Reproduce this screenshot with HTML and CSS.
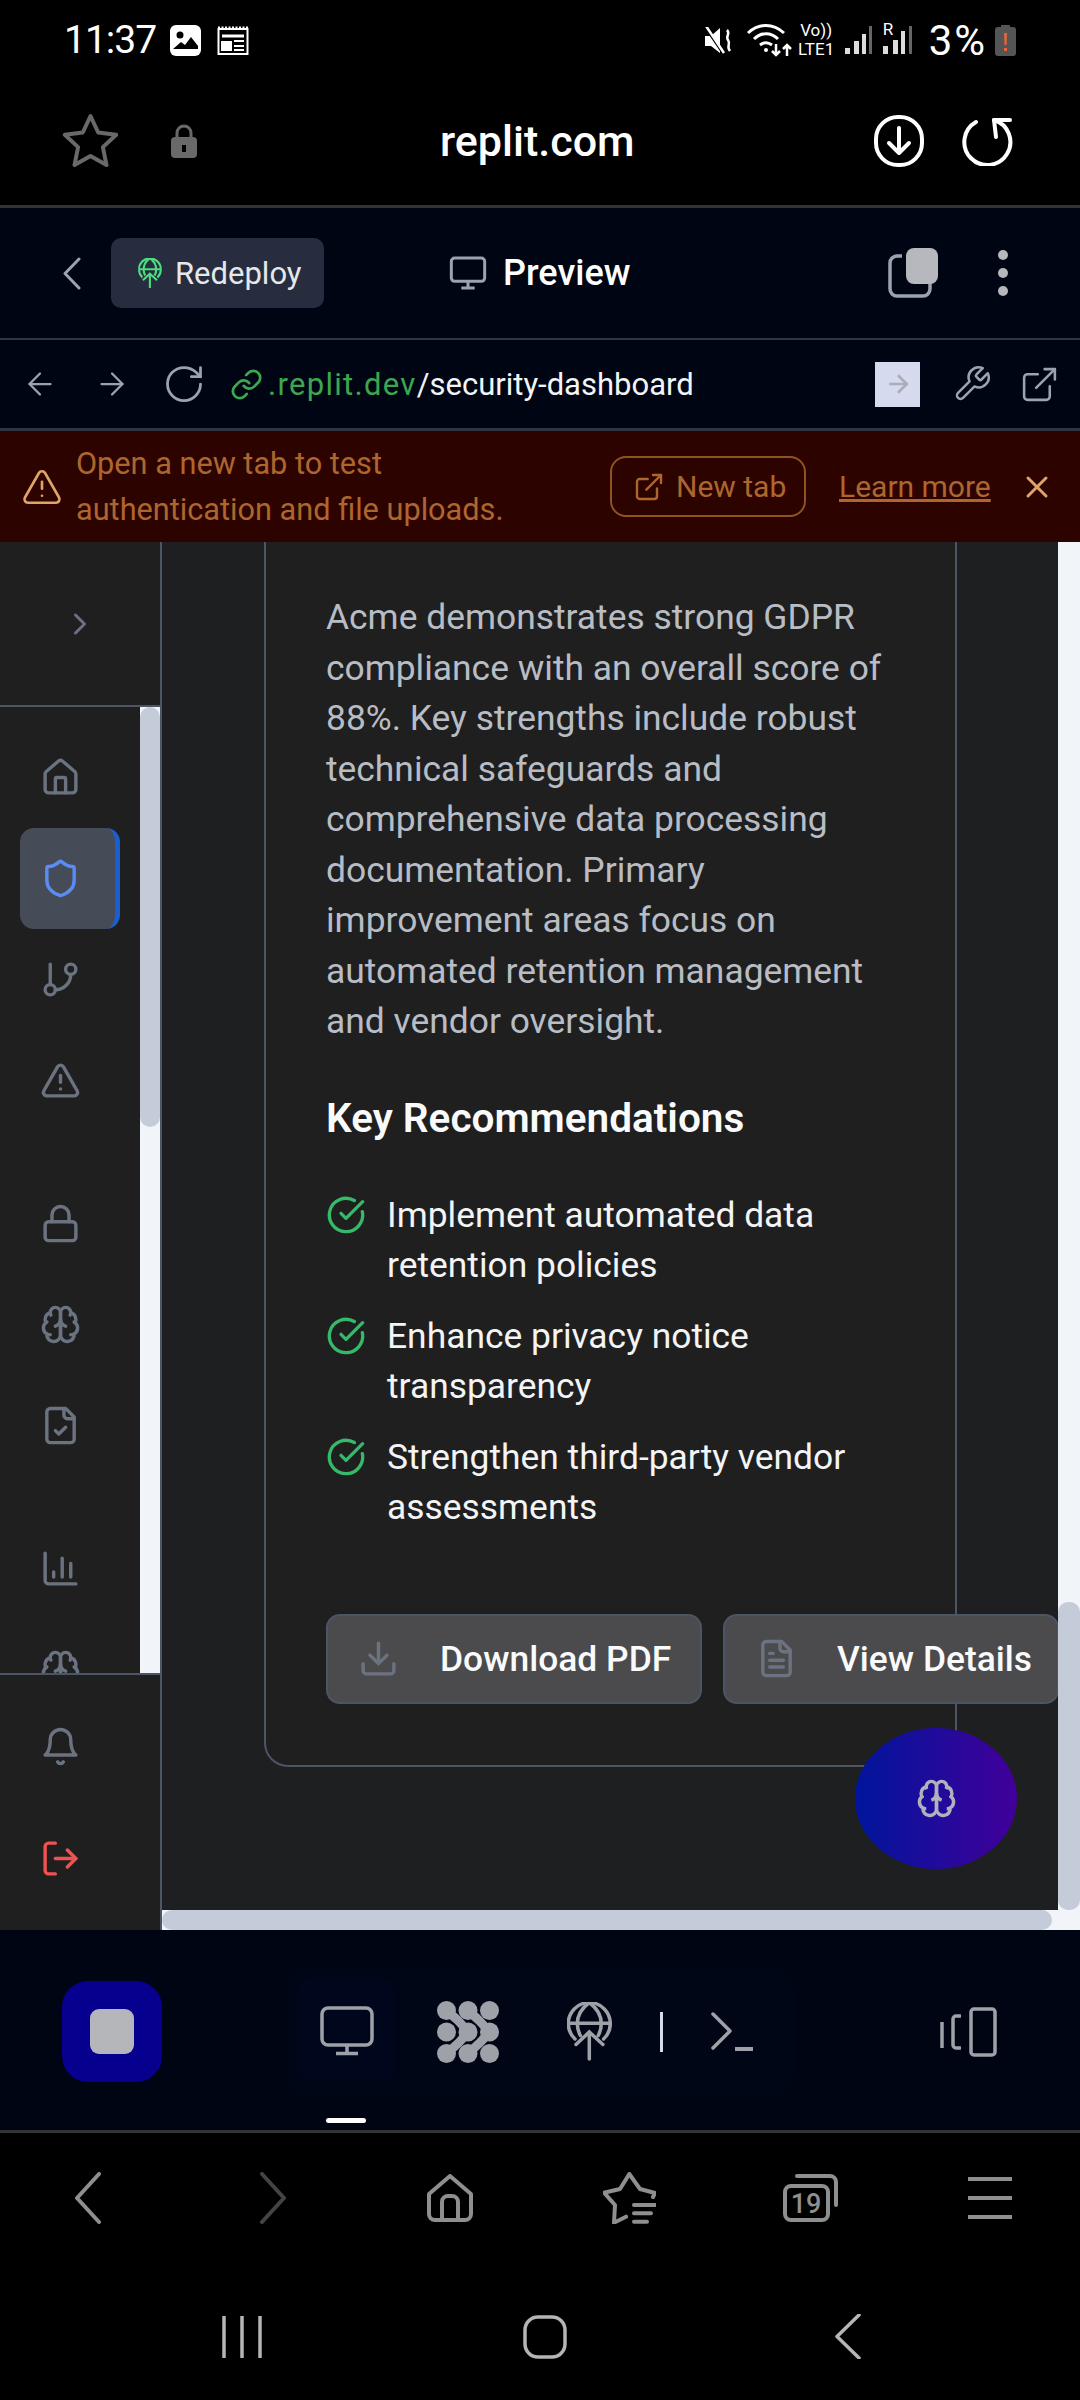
FILE: index.html
```html
<!DOCTYPE html>
<html lang="en">
<head>
    <meta charset="UTF-8">
    <meta name="viewport" content="width=device-width, initial-scale=1.0">
    <title>Security Dashboard Preview</title>
    <link rel="stylesheet" href="styles.css">
</head>
<body>
    <svg class="defs" width="0" height="0">
        <symbol id="i-brain" viewBox="0 0 24 24"><path d="M12 5a3 3 0 1 0-5.997.125 4 4 0 0 0-2.526 5.77 4 4 0 0 0 .556 6.588A4 4 0 1 0 12 18Z"/><path d="M12 5a3 3 0 1 1 5.997.125 4 4 0 0 1 2.526 5.77 4 4 0 0 1-.556 6.588A4 4 0 1 1 12 18Z"/><path d="M15 13a4.5 4.5 0 0 1-3-4 4.5 4.5 0 0 1-3 4"/><path d="M17.599 6.5a3 3 0 0 0 .399-1.375"/><path d="M6.003 5.125A3 3 0 0 0 6.401 6.5"/><path d="M3.477 10.896a4 4 0 0 1 .585-.396"/><path d="M19.938 10.5a4 4 0 0 1 .585.396"/><path d="M6 18a4 4 0 0 1-1.967-.516"/><path d="M19.967 17.484A4 4 0 0 1 18 18"/></symbol>
        <symbol id="i-check" viewBox="0 0 24 24"><path d="M21.801 10A10 10 0 1 1 17 3.335"/><path d="m9 11 3 3L22 4"/></symbol>
        <symbol id="i-monitor" viewBox="0 0 24 24"><rect x="2" y="3" width="20" height="14" rx="2"/><path d="M8 21h8M12 17v4"/></symbol>
        <symbol id="i-external" viewBox="0 0 24 24"><path d="M15 3h6v6"/><path d="M10 14 21 3"/><path d="M18 13v6a2 2 0 0 1-2 2H5a2 2 0 0 1-2-2V8a2 2 0 0 1 2-2h6"/></symbol>
        <symbol id="i-globe-up" viewBox="0 0 45 59"><path d="M8 37A21 21 0 1 1 36.600 37"/><path d="M1.500 21.300h41.600M22.300 .5c-8 6-12 13-12 21 0 4 1 8 3 12M22.300 .5c8 6 12 13 12 21 0 4-1 8-3 12M22.300 31v26M9 42.500 22.300 30l13.600 12.500"/></symbol>
    </svg>

    <div class="status-bar">
        <span class="clock">11:37</span>
        <svg class="ml-16" width="31" height="31" viewBox="0 0 31 31"><rect width="31" height="31" rx="6" fill="#fff"/><circle cx="10" cy="10" r="3.500" fill="#000"/><path d="M3 24l8-7 4 3 6-8 7 9v3H3z" fill="#000"/></svg>
        <svg class="ml-16" width="32" height="29" viewBox="0 0 32 29" fill="none" stroke="#fff" stroke-width="2"><rect x="1.500" y="3" width="29" height="25"/><path d="M1 2h30" stroke-dasharray="2 1.500" stroke-width="3"/><path d="M5 10h22" stroke-width="3"/><path d="M5 16h9v8H5z" fill="#fff"/><path d="M17 15h10M17 20h10M17 24h10"/></svg>
        <div class="status-right">
            <svg width="29" height="27" viewBox="0 0 29 27"><path d="M1 9h6l9-8v25l-9-7H1z" fill="#fff"/><path d="M2 1l17 25" stroke="#000" stroke-width="3"/><path d="M2 -1l18 27" stroke="#fff" stroke-width="2.500"/><path d="M23 3c4 4-2 6 1 10s-2 6 2 11" fill="none" stroke="#fff" stroke-width="2.500"/></svg>
            <svg class="ml-14" width="45" height="33" viewBox="0 0 45 33" fill="none" stroke="#fff" stroke-width="3"><path d="M1 9c11-10 25-10 36 0M7 15c7-7 17-7 24 0M13 21c4-3 8-3 12 0"/><circle cx="19" cy="26" r="2" fill="#fff" stroke="none"/><path d="M29 20v11M25 27l4 4 4-4M40 32V21M36 25l4-4 4 4" stroke-width="2.500"/></svg>
            <div class="volte ml-5"><span>Vo))</span><span>LTE1</span></div>
            <svg class="ml-9" width="27" height="28" viewBox="0 0 27 28"><path d="M0 22h5v6H0zM9 15h5v13H9zM17 8h4v20h-4z" fill="#ddd"/><path d="M24 0h3v28h-3z" fill="#666"/></svg>
            <div class="roam ml-11"><span class="roam-r">R</span><svg width="30" height="28" viewBox="0 0 30 28"><path d="M0 20h5v8H0zM10 14h5v14h-5zM18 5h4v23h-4z" fill="#ddd"/><path d="M26 0h3v28h-3z" fill="#666"/></svg></div>
            <span class="battery-text ml-16">3%</span>
            <svg class="ml-8" width="21" height="31" viewBox="0 0 21 31"><path d="M6 0h9v3H6z" fill="#555"/><rect y="2" width="21" height="29" rx="3" fill="#555"/><path d="M9 8h3l-.5 12h-2zM9 23h3v3H9z" fill="#e8643c"/></svg>
        </div>
    </div>

    <div class="browser-bar">
        <svg width="57" height="56" viewBox="0 0 57 56" fill="none" stroke="#696969" stroke-width="4" stroke-linejoin="round"><path d="M28.500 3l7.700 16.500 18 2.300-13.300 12.300 3.600 18-16-9-16 9 3.600-18L2.800 21.800l18-2.300z"/></svg>
        <svg class="lock-icon" width="26" height="34" viewBox="0 0 26 34"><path d="M6 15V9a7 7 0 0 1 14 0v6" fill="none" stroke="#696969" stroke-width="3"/><rect y="13" width="26" height="21" rx="4" fill="#696969"/><path d="M11 21h4v7h-4z" fill="#000"/></svg>
        <span class="site-name">replit.com</span>
        <div class="browser-actions">
            <svg width="50" height="52" viewBox="0 0 50 52" fill="none" stroke="#fff" stroke-width="4" stroke-linecap="round" stroke-linejoin="round"><rect x="2" y="2" width="46" height="48" rx="22"/><path d="M25 13v25M15 28l10 10 10-10"/></svg>
            <svg width="52" height="50" viewBox="0 0 52 50" fill="none" stroke="#fff" stroke-width="4" stroke-linecap="round" stroke-linejoin="round"><path d="M32 4A23 23 0 1 1 14 6"/><path d="M32 4h16M32 4l2 17"/></svg>
        </div>
    </div>

    <div class="app-header">
        <svg width="19" height="33" viewBox="0 0 19 33" fill="none" stroke="#9ca3af" stroke-width="3" stroke-linecap="round" stroke-linejoin="round"><path d="M17 2L3 16.500 17 31"/></svg>
        <div class="deploy-pill">
            <svg width="24" height="31" viewBox="0 0 45 59" fill="none" stroke="#4ade80" stroke-width="4"><use href="#i-globe-up"/></svg>
            <span>Redeploy</span>
        </div>
        <div class="preview-title">
            <svg class="line-icon" width="40" height="40" viewBox="0 0 24 24"><use href="#i-monitor"/></svg>
            <span>Preview</span>
        </div>
        <svg class="copy-icon" width="50" height="50" viewBox="0 0 50 50"><path d="M14 8H9a7 7 0 0 0-7 7v26a7 7 0 0 0 7 7h26a7 7 0 0 0 7-7v-6" fill="none" stroke="#9ca3af" stroke-width="3.500"/><rect x="18" y="0" width="32" height="36" rx="8" fill="#b6b8bd"/></svg>
        <svg class="more-icon" width="10" height="46" viewBox="0 0 10 46" fill="#b6b8bd"><circle cx="5" cy="5" r="5"/><circle cx="5" cy="23" r="5"/><circle cx="5" cy="41" r="5"/></svg>
    </div>

    <div class="url-bar">
        <svg class="url-icon" width="36" height="36" viewBox="0 0 24 24"><path d="m12 19-7-7 7-7"/><path d="M19 12H5"/></svg>
        <svg class="url-icon ml-36" width="36" height="36" viewBox="0 0 24 24"><path d="m12 5 7 7-7 7"/><path d="M5 12h14"/></svg>
        <svg class="url-icon ml-32" width="44" height="44" viewBox="0 0 24 24"><path d="M21 12a9 9 0 1 1-9-9c2.520 0 4.930 1 6.740 2.740L21 8"/><path d="M21 3v5h-5"/></svg>
        <svg class="link-icon" width="33" height="33" viewBox="0 0 24 24"><path d="M10 13a5 5 0 0 0 7.540.540l3-3a5 5 0 0 0-7.070-7.070l-1.720 1.710"/><path d="M14 11a5 5 0 0 0-7.540-.540l-3 3a5 5 0 0 0 7.070 7.070l1.710-1.710"/></svg>
        <span class="url-text"><span class="url-host">.replit.dev</span>/security-dashboard</span>
        <div class="go-btn"><svg width="30" height="30" viewBox="0 0 24 24" fill="none" stroke="#a8adb8" stroke-width="2"><path d="m12 5 7 7-7 7"/><path d="M5 12h14"/></svg></div>
        <svg class="url-icon ml-32" width="40" height="40" viewBox="0 0 24 24"><path d="M14.700 6.300a1 1 0 0 0 0 1.400l1.600 1.600a1 1 0 0 0 1.400 0l3.770-3.770a6 6 0 0 1-7.940 7.940l-6.910 6.910a2.120 2.120 0 0 1-3-3l6.910-6.910a6 6 0 0 1 7.940-7.940l-3.760 3.760z"/></svg>
        <svg class="url-icon ml-27" width="41" height="41" viewBox="0 0 24 24"><use href="#i-external"/></svg>
    </div>

    <div class="warn-banner">
        <svg class="warn-icon" width="42" height="42" viewBox="0 0 24 24"><path d="m21.730 18-8-14a2 2 0 0 0-3.480 0l-8 14A2 2 0 0 0 4 21h16a2 2 0 0 0 1.730-3"/><path d="M12 9v4"/><path d="M12 17h.01"/></svg>
        <p class="warn-text">Open a new tab to test<br>authentication and file uploads.</p>
        <div class="warn-btn">
            <svg width="32" height="32" viewBox="0 0 24 24"><use href="#i-external"/></svg>
            <span>New tab</span>
        </div>
        <span class="warn-link">Learn more</span>
        <svg class="warn-close" width="36" height="36" viewBox="0 0 24 24"><path d="M18 6 6 18"/><path d="m6 6 12 12"/></svg>
    </div>

    <div class="workspace">
        <aside class="sidebar">
            <div class="side-top">
                <svg class="nav-icon" width="36" height="36" viewBox="0 0 24 24"><path d="m9 18 6-6-6-6"/></svg>
            </div>
            <div class="side-nav">
                <div class="side-scroll">
                    <div class="nav-item"><svg class="nav-icon" width="41" height="41" viewBox="0 0 24 24"><path d="M15 21v-8a1 1 0 0 0-1-1h-4a1 1 0 0 0-1 1v8"/><path d="M3 10a2 2 0 0 1 .709-1.528l7-5.999a2 2 0 0 1 2.582 0l7 5.999A2 2 0 0 1 21 10v9a2 2 0 0 1-2 2H5a2 2 0 0 1-2-2z"/></svg></div>
                    <div class="nav-item active"><svg class="nav-icon" width="41" height="41" viewBox="0 0 24 24"><path d="M20 13c0 5-3.500 7.500-7.660 8.950a1 1 0 0 1-.670-.010C7.500 20.500 4 18 4 13V6a1 1 0 0 1 1-1c2 0 4.500-1.200 6.240-2.720a1.170 1.170 0 0 1 1.520 0C14.510 3.810 17 5 19 5a1 1 0 0 1 1 1z"/></svg></div>
                    <div class="nav-item"><svg class="nav-icon" width="41" height="41" viewBox="0 0 24 24"><path d="M6 3v12"/><circle cx="18" cy="6" r="3"/><circle cx="6" cy="18" r="3"/><path d="M18 9a9 9 0 0 1-9 9"/></svg></div>
                    <div class="nav-item"><svg class="nav-icon" width="41" height="41" viewBox="0 0 24 24"><path d="m21.730 18-8-14a2 2 0 0 0-3.480 0l-8 14A2 2 0 0 0 4 21h16a2 2 0 0 0 1.730-3"/><path d="M12 9v4"/><path d="M12 17h.01"/></svg></div>
                    <div class="nav-item group-start"><svg class="nav-icon" width="41" height="41" viewBox="0 0 24 24"><rect x="3" y="11" width="18" height="11" rx="2"/><path d="M7 11V7a5 5 0 0 1 10 0v4"/></svg></div>
                    <div class="nav-item"><svg class="nav-icon" width="41" height="41" viewBox="0 0 24 24"><use href="#i-brain"/></svg></div>
                    <div class="nav-item"><svg class="nav-icon" width="41" height="41" viewBox="0 0 24 24"><path d="M15 2H6a2 2 0 0 0-2 2v16a2 2 0 0 0 2 2h12a2 2 0 0 0 2-2V7Z"/><path d="M14 2v4a2 2 0 0 0 2 2h4"/><path d="m9 15 2 2 4-4"/></svg></div>
                    <div class="nav-item group-start"><svg class="nav-icon" width="41" height="41" viewBox="0 0 24 24"><path d="M3 3v16a2 2 0 0 0 2 2h16"/><path d="M18 17V9"/><path d="M13 17V6"/><path d="M8 17v-3"/></svg></div>
                    <div class="nav-item"><svg class="nav-icon" width="41" height="41" viewBox="0 0 24 24"><use href="#i-brain"/></svg></div>
                </div>
                <div class="side-track"><div class="side-thumb"></div></div>
            </div>
            <div class="side-foot">
                <div class="foot-item"><svg class="nav-icon" width="41" height="41" viewBox="0 0 24 24"><path d="M6 8a6 6 0 0 1 12 0c0 7 3 9 3 9H3s3-2 3-9"/><path d="M10.300 21a1.940 1.940 0 0 0 3.400 0"/></svg></div>
                <div class="foot-item logout"><svg class="nav-icon" width="41" height="41" viewBox="0 0 24 24"><path d="M9 21H5a2 2 0 0 1-2-2V5a2 2 0 0 1 2-2h4"/><path d="m16 17 5-5-5-5"/><path d="M21 12H9"/></svg></div>
            </div>
        </aside>

        <div class="main-wrap">
            <div class="main-row">
                <main class="main">
                    <section class="card">
                        <p class="summary">Acme demonstrates strong GDPR compliance with an overall score of 88%. Key strengths include robust technical safeguards and comprehensive data processing documentation. Primary improvement areas focus on automated retention management and vendor oversight.</p>
                        <h3 class="rec-title">Key Recommendations</h3>
                        <ul class="rec-list">
                            <li><svg class="check-icon" width="40" height="40" viewBox="0 0 24 24"><use href="#i-check"/></svg><span>Implement automated data retention policies</span></li>
                            <li><svg class="check-icon" width="40" height="40" viewBox="0 0 24 24"><use href="#i-check"/></svg><span>Enhance privacy notice transparency</span></li>
                            <li><svg class="check-icon" width="40" height="40" viewBox="0 0 24 24"><use href="#i-check"/></svg><span>Strengthen third-party vendor assessments</span></li>
                        </ul>
                        <div class="card-actions">
                            <button class="action-btn btn-pdf">
                                <svg class="nav-icon" width="41" height="41" viewBox="0 0 24 24"><path d="M21 15v4a2 2 0 0 1-2 2H5a2 2 0 0 1-2-2v-4"/><path d="m7 10 5 5 5-5"/><path d="M12 15V3"/></svg>
                                <span>Download PDF</span>
                            </button>
                            <button class="action-btn btn-view">
                                <svg class="nav-icon" width="41" height="41" viewBox="0 0 24 24"><path d="M15 2H6a2 2 0 0 0-2 2v16a2 2 0 0 0 2 2h12a2 2 0 0 0 2-2V7Z"/><path d="M14 2v4a2 2 0 0 0 2 2h4"/><path d="M10 9H8"/><path d="M16 13H8"/><path d="M16 17H8"/></svg>
                                <span>View Details</span>
                            </button>
                        </div>
                    </section>
                    <div class="fab"><svg width="41" height="41" viewBox="0 0 24 24"><use href="#i-brain"/></svg></div>
                </main>
                <div class="main-track"><div class="main-thumb"></div></div>
            </div>
            <div class="h-track"><div class="h-thumb"></div></div>
        </div>
    </div>

    <div class="tool-bar">
        <div class="stop-btn"><div class="stop-square"></div></div>
        <div class="tool-group">
            <div class="tool-tab"><svg width="54" height="50" viewBox="0 0 54 50" fill="none" stroke="#9ea2a8" stroke-width="3.500"><rect x="2" y="2" width="50" height="37" rx="6"/><path d="M27 39v8M16 47.500h22"/></svg></div>
            <svg class="dots-icon" width="62" height="62" viewBox="0 0 62 62" fill="#9ea2a8"><circle cx="9.500" cy="9.500" r="9.500"/><circle cx="31" cy="9.500" r="9.500"/><circle cx="52.500" cy="9.500" r="9.500"/><circle cx="9.500" cy="31" r="9.500"/><circle cx="31" cy="31" r="9.500"/><circle cx="52.500" cy="31" r="9.500"/><circle cx="9.500" cy="52.500" r="9.500"/><circle cx="31" cy="52.500" r="9.500"/><circle cx="52.500" cy="52.500" r="9.500"/><path d="M9.500 9.500C22 20 22 20 31 31 22 42 22 42 9.500 52.500M31 9.500C43 20 43 20 52.500 31 43 42 43 42 31 52.500" fill="none" stroke="#9ea2a8" stroke-width="9"/></svg>
            <svg class="globe-icon" width="45" height="59" viewBox="0 0 45 59" fill="none" stroke="#9ea2a8" stroke-width="3.500" stroke-linecap="round"><use href="#i-globe-up"/></svg>
            <div class="tool-sep"></div>
            <svg class="term-icon" width="44" height="40" viewBox="0 0 44 40" fill="none" stroke="#9ea2a8" stroke-width="3.500" stroke-linecap="round" stroke-linejoin="round"><path d="M2 2l17 17L2 36"/><path d="M24 37h18" stroke-linecap="butt" stroke-width="4"/></svg>
        </div>
        <svg class="device-icon" width="57" height="50" viewBox="0 0 57 50" fill="none" stroke="#9ea2a8" stroke-width="3.500"><path d="M2 15v26"/><path d="M21 9h-5a3 3 0 0 0-3 3v26a3 3 0 0 0 3 3h5"/><rect x="31" y="2" width="24" height="46" rx="3"/></svg>
    </div>
    <div class="tool-indicator-row"><div class="tool-indicator"></div></div>

    <div class="browser-nav">
        <svg width="27" height="52" viewBox="0 0 27 52" class="bn-stroke"><path d="M25 2L3 26l22 24"/></svg>
        <svg width="26" height="52" viewBox="0 0 26 52" class="bn-stroke dim"><path d="M2 2l22 24L2 50"/></svg>
        <svg width="48" height="48" viewBox="0 0 48 48" class="bn-stroke"><path d="M3 20L24 2l21 18v20a6 6 0 0 1-6 6H9a6 6 0 0 1-6-6z"/><path d="M16 46V28a6 6 0 0 1 6-6h4a6 6 0 0 1 6 6v18"/></svg>
        <svg width="53" height="52" viewBox="0 0 53 52" class="bn-stroke"><path d="M50 25l2-4-15-4L26.300 2 17 17 1 20.700 12 33l-1 17.700L23 44.700"/><path d="M31 33h22M31 41.300h17M31 49.700h13"/></svg>
        <svg width="55" height="48" viewBox="0 0 55 48" class="bn-stroke"><rect x="2" y="12" width="43" height="34" rx="6"/><path d="M14 2h33a6 6 0 0 1 6 6v23"/><text class="tab-count" x="23" y="39">19</text></svg>
        <svg width="44" height="42" viewBox="0 0 44 42" fill="#8f8f8f"><rect width="44" height="4"/><rect y="19" width="44" height="4"/><rect y="38" width="44" height="4"/></svg>
    </div>

    <div class="system-nav">
        <svg width="40" height="42" viewBox="0 0 40 42" class="sys-stroke"><path d="M2 0v42M20 0v42M38 0v42"/></svg>
        <svg width="44" height="44" viewBox="0 0 44 44" class="sys-stroke"><rect x="2" y="2" width="40" height="40" rx="13"/></svg>
        <svg width="26" height="45" viewBox="0 0 26 45" class="sys-stroke"><path d="M24 1L2 22.500 24 44"/></svg>
    </div>
</body>
</html>
```

FILE: styles.css
```css
* {
    box-sizing: border-box;
}
html, body {
    margin: 0;
    padding: 0;
}
body {
    width: 1080px;
    height: 2400px;
    overflow: hidden;
    background-color: #000;
    color: #fff;
    font-family: Roboto, "Liberation Sans", sans-serif;
}
.defs {
    position: absolute;
}
svg {
    flex-shrink: 0;
    display: block;
}
p, h3, ul {
    margin: 0;
    padding: 0;
}
.ml-5 { margin-left: 5px; }
.ml-8 { margin-left: 8px; }
.ml-9 { margin-left: 9px; }
.ml-11 { margin-left: 11px; }
.ml-14 { margin-left: 14px; }
.ml-16 { margin-left: 16px; }
.ml-27 { margin-left: 27px; }
.ml-32 { margin-left: 32px; }
.ml-36 { margin-left: 36px; }

/* phone status bar */
.status-bar {
    height: 80px;
    display: flex;
    align-items: center;
    padding: 0 64px;
}
.clock {
    font-size: 39px;
    letter-spacing: -1px;
    width: 90px;
}
.status-right {
    margin-left: auto;
    display: flex;
    align-items: center;
}
.volte {
    display: flex;
    flex-direction: column;
    align-items: center;
    width: 39px;
    font-size: 17px;
    line-height: 19px;
}
.roam {
    position: relative;
    width: 30px;
    height: 28px;
}
.roam-r {
    position: absolute;
    left: 0;
    top: -7px;
    font-size: 17px;
}
.battery-text {
    font-size: 42px;
    letter-spacing: 2px;
}

/* samsung browser top bar */
.browser-bar {
    height: 128px;
    padding: 0 66px 4px 62px;
    display: flex;
    align-items: center;
    border-bottom: 3px solid #333;
}
.lock-icon {
    margin-left: 52px;
}
.site-name {
    margin-left: 243px;
    font-size: 43px;
    font-weight: 500;
}
.browser-actions {
    margin-left: auto;
    display: flex;
    align-items: center;
    gap: 38px;
}

/* replit header */
.app-header {
    height: 132px;
    background-color: #000514;
    display: flex;
    align-items: center;
    padding-left: 62px;
    border-bottom: 2px solid #2f3545;
    color: #e5e7eb;
}
.deploy-pill {
    margin-left: 30px;
    width: 213px;
    height: 70px;
    background-color: #272d3f;
    border-radius: 10px;
    display: flex;
    align-items: center;
    gap: 13px;
    padding-left: 27px;
    font-size: 31px;
}
.preview-title {
    margin-left: 124px;
    display: flex;
    align-items: center;
    gap: 15px;
    font-size: 36px;
    font-weight: 500;
    color: #fff;
}
.line-icon {
    fill: none;
    stroke: #9ca3af;
    stroke-width: 1.800;
}
.copy-icon {
    margin-left: 258px;
}
.more-icon {
    margin-left: 60px;
}

/* url row */
.url-bar {
    height: 91px;
    background-color: #000514;
    display: flex;
    align-items: center;
    padding-left: 22px;
    border-bottom: 3px solid #2f3545;
}
.url-icon {
    fill: none;
    stroke: #9ca3af;
    stroke-width: 1.500;
    stroke-linecap: round;
    stroke-linejoin: round;
}
.link-icon {
    margin-left: 24px;
    fill: none;
    stroke: #3fa650;
    stroke-width: 2;
    stroke-linecap: round;
    stroke-linejoin: round;
}
.url-text {
    margin-left: 5px;
    width: 607px;
    font-size: 31px;
    color: #f3f4f6;
}
.url-host {
    color: #3fa650;
    letter-spacing: 1.300px;
}
.go-btn {
    width: 45px;
    height: 45px;
    background-color: #d5daee;
    display: flex;
    align-items: center;
    justify-content: center;
}

/* warning banner */
.warn-banner {
    height: 111px;
    background-color: #2d0300;
    display: flex;
    align-items: center;
    padding-left: 21px;
    color: #ad662d;
}
.warn-icon {
    fill: none;
    stroke: #e0a468;
    stroke-width: 1.500;
    stroke-linecap: round;
    stroke-linejoin: round;
}
.warn-text {
    margin-left: 13px;
    width: 534px;
    font-size: 30.700px;
    line-height: 46px;
    white-space: nowrap;
}
.warn-btn {
    width: 196px;
    height: 61px;
    border: 2px solid #8f5420;
    border-radius: 16px;
    display: flex;
    align-items: center;
    gap: 11px;
    padding-left: 21px;
    font-size: 30px;
}
.warn-btn svg {
    fill: none;
    stroke: #ad662d;
    stroke-width: 1.800;
    stroke-linecap: round;
    stroke-linejoin: round;
}
.warn-link {
    margin-left: 33px;
    font-size: 30px;
    text-decoration: underline;
}
.warn-close {
    margin-left: 28px;
    fill: none;
    stroke: #e0a468;
    stroke-width: 2;
    stroke-linecap: round;
}

/* dashboard */
.workspace {
    height: 1388px;
    display: flex;
    background-color: #1e1f21;
}
.sidebar {
    width: 162px;
    flex-shrink: 0;
    background-color: #1f1f1f;
    border-right: 2px solid #4b5563;
    display: flex;
    flex-direction: column;
    height: 100%;
}
.side-top {
    height: 165px;
    border-bottom: 2px solid #4b5563;
    display: flex;
    align-items: center;
    padding-left: 62px;
}
.side-nav {
    height: 968px;
    display: flex;
    border-bottom: 2px solid #4b5563;
}
.side-scroll {
    width: 140px;
    height: 966px;
    overflow: hidden;
    padding-top: 20px;
}
.side-track {
    width: 20px;
    background-color: #f1f5f9;
}
.side-thumb {
    height: 420px;
    background-color: #c3ccd8;
    border-radius: 10px;
}
.nav-icon {
    fill: none;
    stroke: #6b7280;
    stroke-width: 2;
    stroke-linecap: round;
    stroke-linejoin: round;
}
.nav-item {
    margin-left: 20px;
    width: 100px;
    height: 101px;
    padding-left: 20px;
    display: flex;
    align-items: center;
    border-radius: 14px;
}
.nav-item.active {
    background-color: #454b57;
    border-right: 5px solid #1a5fd0;
}
.nav-item.active .nav-icon {
    stroke: #5b8cf5;
}
.group-start {
    margin-top: 42px;
}
.side-foot {
    flex: 1;
    padding-top: 15px;
}
.foot-item {
    height: 112px;
    padding-left: 40px;
    display: flex;
    align-items: center;
}
.logout .nav-icon {
    stroke: #ef5350;
}
.main-wrap {
    flex: 1;
    display: flex;
    flex-direction: column;
    min-width: 0;
}
.main-row {
    height: 1368px;
    display: flex;
}
.main {
    position: relative;
    width: 896px;
    overflow: hidden;
    padding-left: 102px;
}
.card {
    width: 693px;
    height: 1225px;
    background-color: #1f1f1f;
    border: 2px solid #4b5563;
    border-top: none;
    border-radius: 0 0 24px 24px;
    padding: 50px 0 0 60px;
}
.summary {
    width: 570px;
    font-size: 35.400px;
    line-height: 50.500px;
    color: #b8bdc5;
}
.rec-title {
    margin-top: 43px;
    font-size: 40.500px;
    line-height: 56px;
    font-weight: 600;
    color: #f9fafb;
}
.rec-list {
    margin-top: 44px;
    list-style: none;
    width: 570px;
    display: flex;
    flex-direction: column;
    gap: 20px;
}
.rec-list li {
    display: flex;
    gap: 21px;
    font-size: 35.400px;
    line-height: 50.500px;
    color: #f3f4f6;
}
.check-icon {
    margin-top: 5px;
    fill: none;
    stroke: #35b96a;
    stroke-width: 2;
    stroke-linecap: round;
    stroke-linejoin: round;
}
.card-actions {
    margin-top: 81px;
    display: flex;
    gap: 21px;
    width: 800px;
}
.action-btn {
    height: 90px;
    background-color: #4b4b4d;
    border: 2px solid #4b5563;
    border-radius: 14px;
    color: #f9fafb;
    display: flex;
    align-items: center;
    font-family: Roboto, sans-serif;
    font-size: 35.400px;
    font-weight: 500;
    padding: 0;
}
.btn-pdf {
    width: 376px;
    padding-left: 30px;
    gap: 41px;
}
.btn-view {
    width: 336px;
    padding-left: 31px;
    gap: 40px;
}
.fab {
    position: absolute;
    left: 693px;
    top: 1186px;
    width: 162px;
    height: 141px;
    border-radius: 50%;
    background: linear-gradient(90deg, #00159c, #41009a);
    display: flex;
    align-items: center;
    justify-content: center;
}
.fab svg {
    fill: none;
    stroke: #b0b2bb;
    stroke-width: 2;
}
.main-track {
    width: 22px;
    background-color: #f1f5f9;
    display: flex;
    flex-direction: column;
    justify-content: flex-end;
}
.main-thumb {
    height: 308px;
    background-color: #c3ccd8;
    border-radius: 10px;
}
.h-track {
    height: 20px;
    background-color: #f1f5f9;
}
.h-thumb {
    width: 890px;
    height: 20px;
    background-color: #c3ccd8;
    border-radius: 10px;
}

/* replit bottom tools */
.tool-bar {
    height: 188px;
    background-color: #000514;
    display: flex;
    align-items: center;
    padding-left: 62px;
    padding-top: 15px;
}
.stop-btn {
    width: 100px;
    height: 101px;
    background-color: #07008f;
    border-radius: 26px;
    display: flex;
    align-items: center;
    justify-content: center;
}
.stop-square {
    width: 44px;
    height: 45px;
    background-color: #b4b6ba;
    border-radius: 9px;
}
.tool-group {
    margin-left: 124px;
    width: 509px;
    height: 130px;
    background-color: #000616;
    border-radius: 24px;
    display: flex;
    align-items: center;
    padding-left: 12px;
}
.tool-tab {
    width: 98px;
    height: 105px;
    background-color: #00071d;
    border-radius: 16px;
    display: flex;
    align-items: center;
    justify-content: center;
    margin-top: -5px;
    padding-top: 3px;
}
.dots-icon {
    margin-left: 41px;
}
.globe-icon {
    margin-left: 68px;
}
.tool-sep {
    margin-left: 48px;
    width: 3px;
    height: 40px;
    background-color: #d5daee;
}
.term-icon {
    margin-left: 48px;
}
.device-icon {
    margin-left: 145px;
}
.tool-indicator-row {
    height: 15px;
    background-color: #000514;
    padding-left: 326px;
    border-bottom: 3px solid #333;
}
.tool-indicator {
    width: 40px;
    height: 5px;
    background-color: #fff;
    border-radius: 3px;
}

/* browser bottom nav */
.browser-nav {
    height: 130px;
    display: flex;
    align-items: center;
    padding-left: 74px;
}
.browser-nav svg:nth-child(2) { margin-left: 159px; }
.browser-nav svg:nth-child(3) { margin-left: 140px; }
.browser-nav svg:nth-child(4) { margin-left: 129px; }
.browser-nav svg:nth-child(5) { margin-left: 127px; }
.browser-nav svg:nth-child(6) { margin-left: 130px; }
.bn-stroke {
    fill: none;
    stroke: #8f8f8f;
    stroke-width: 4;
    stroke-linecap: round;
    stroke-linejoin: round;
}
.bn-stroke.dim {
    stroke: #444;
}
.tab-count {
    fill: #8f8f8f;
    stroke: none;
    font-size: 27px;
    font-weight: 500;
    text-anchor: middle;
    font-family: Roboto, sans-serif;
}
.system-nav {
    height: 137px;
    display: flex;
    align-items: center;
    padding-left: 222px;
    padding-top: 10px;
}
.system-nav svg:nth-child(2) { margin-left: 261px; }
.system-nav svg:nth-child(3) { margin-left: 268px; }
.sys-stroke {
    fill: none;
    stroke: #b5b5b5;
    stroke-width: 3.500;
    stroke-linecap: round;
    stroke-linejoin: round;
}
```
